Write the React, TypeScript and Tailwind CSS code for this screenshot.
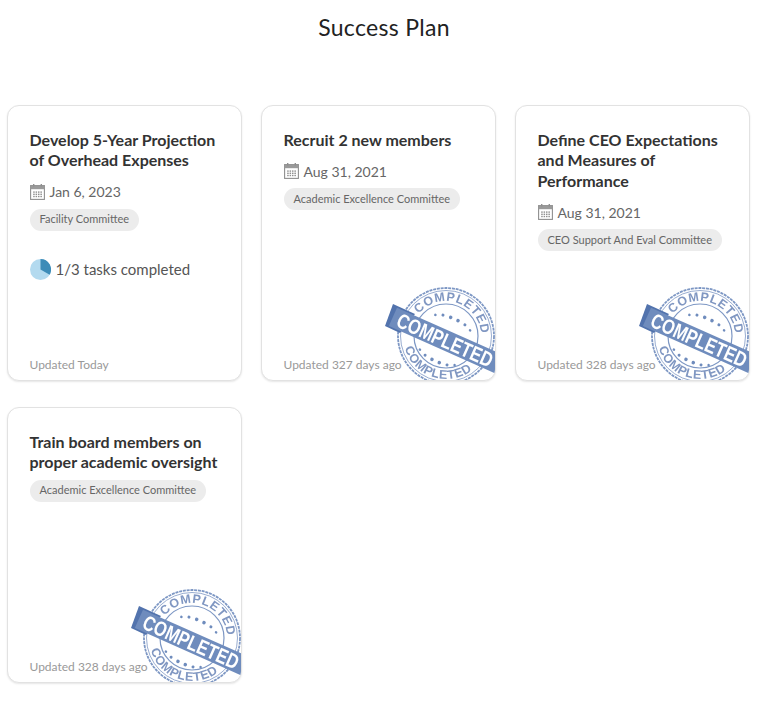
const font = "font-['Lato','Noto_Sans',sans-serif]";

function CalendarIcon() {
  const dots = [];
  for (let r = 0; r < 3; r++) for (let c = 0; c < 4; c++) dots.push(<rect key={`${r}-${c}`} x={3.2 + c * 2.4} y={7.4 + r * 2.2} width="1.5" height="1.4" fill="#8f8f8f" />);
  return (
    <svg width="15" height="16" viewBox="0 0 15 16" className="shrink-0">
      <rect x="0.6" y="1.6" width="13.8" height="13.8" fill="#fff" stroke="#8f8f8f" strokeWidth="1.1" />
      <rect x="0.6" y="1.6" width="13.8" height="3.6" fill="#9a9a9a" />
      <rect x="3" y="0" width="1.4" height="2.6" fill="#8f8f8f" />
      <rect x="10.6" y="0" width="1.4" height="2.6" fill="#8f8f8f" />
      {dots}
    </svg>
  );
}

function Pie() {
  return (
    <svg width="21" height="21" viewBox="0 0 21 21" className="shrink-0">
      <circle cx="10.5" cy="10.5" r="10.5" fill="#b3daef" />
      <path d="M10.5 10.5 L10.5 0 A10.5 10.5 0 0 1 19.6 15.75 Z" fill="#3d8cb8" />
    </svg>
  );
}

function Stamp() {
  const c = "#7d97c4";
  const sans = "'Liberation Sans',sans-serif";
  return (
    <svg width="113" height="94" viewBox="0 0 113 94" className="absolute right-0 bottom-0 blur-[0.5px]">
      <defs>
        <path id="stampTop" d="M 29 50 A 35 35 0 0 1 99 50" />
        <path id="stampBottom" d="M 21 50 A 43 43 0 0 0 107 50" />
      </defs>
      <circle cx="64" cy="50" r="48" fill="none" stroke={c} strokeWidth="1.8" strokeDasharray="3 0.8" />
      <circle cx="64" cy="50" r="45.5" fill="none" stroke={c} strokeWidth="0.8" />
      <circle cx="64" cy="50" r="32" fill="none" stroke={c} strokeWidth="1.2" />
      <g transform="rotate(18 64 50)">
        <text fontFamily={sans} fontWeight="700" fontSize="12.5" fill="#8097c2" letterSpacing="0.6">
          <textPath href="#stampTop" startOffset="50%" textAnchor="middle">COMPLETED</textPath>
        </text>
        <text fontFamily={sans} fontWeight="700" fontSize="12.5" fill="#8097c2" letterSpacing="0.6">
          <textPath href="#stampBottom" startOffset="50%" textAnchor="middle">COMPLETED</textPath>
        </text>
      </g>
      <polygon points="11,18 3,40 18,47 33,28" fill="#5273ad" />
      <g transform="rotate(24 63 54)">
        <g fill="#6f8cbd">
          <circle cx="44" cy="35" r="1.3" /><circle cx="51" cy="32" r="1.5" /><circle cx="59" cy="31" r="1.8" /><circle cx="67" cy="31" r="1.8" /><circle cx="75" cy="32" r="1.5" /><circle cx="82" cy="35" r="1.3" />
          <circle cx="44" cy="73" r="1.3" /><circle cx="51" cy="76" r="1.5" /><circle cx="59" cy="77" r="1.8" /><circle cx="67" cy="77" r="1.8" /><circle cx="75" cy="76" r="1.5" /><circle cx="82" cy="73" r="1.3" />
        </g>
        <rect x="6" y="44" width="116" height="20" fill="#6f8cbd" />
        <text x="63" y="61.5" textAnchor="middle" fontFamily={sans} fontWeight="700" fontSize="21" fill="#fff" textLength="103" lengthAdjust="spacingAndGlyphs">COMPLETED</text>
      </g>
    </svg>
  );
}

function Card({ title, date, tag, tasks, updated, done }: { title: string[]; date?: string; tag: string; tasks?: string; updated: string; done?: boolean }) {
  return (
    <div className="relative h-[276px] overflow-hidden rounded-[12px] border-[1.5px] border-[#e2e2e2] bg-white pl-[21.5px] pr-3 pt-[23.5px] shadow-[0_1px_2px_rgba(0,0,0,0.1)]">
      <h2 className="text-[16px] font-bold leading-[20.5px] text-[#333333]">
        {title.map((t) => <div key={t}>{t}</div>)}
      </h2>
      {date ? (
        <div className="mb-[7px] mt-[11px] flex h-[20px] items-center gap-[5px] text-[14px] text-[#666666]">
          <CalendarIcon />
          <span>{date}</span>
        </div>
      ) : (
        <div className="h-[7px]" />
      )}
      <div className="flex h-[22px] w-fit items-center rounded-full bg-[#ececec] px-[10px] text-[11px] text-[#666666]">{tag}</div>
      {tasks && (
        <div className="mt-[28px] flex h-[22px] items-center gap-[5px] text-[15px] text-[#555555]">
          <Pie />
          <span>{tasks}</span>
        </div>
      )}
      {done && <Stamp />}
      <div className="absolute bottom-[7.5px] left-[21.5px] text-[12px] leading-[16px] text-[#999999]">{updated}</div>
    </div>
  );
}

export default function App() {
  return (
    <div className={`${font} min-h-[702px] w-[768px] bg-white`}>
      <h1 className="h-[105px] pt-[12px] text-center text-[23px] font-normal leading-[30px] tracking-[0.3px] text-[#222222]">Success Plan</h1>
      <div className="grid grid-cols-[235px_235px_235px] gap-x-[19px] gap-y-[26px] pl-[7px]">
        <Card title={["Develop 5-Year Projection", "of Overhead Expenses"]} date="Jan 6, 2023" tag="Facility Committee" tasks="1/3 tasks completed" updated="Updated Today" />
        <Card title={["Recruit 2 new members"]} date="Aug 31, 2021" tag="Academic Excellence Committee" updated="Updated 327 days ago" done />
        <Card title={["Define CEO Expectations", "and Measures of", "Performance"]} date="Aug 31, 2021" tag="CEO Support And Eval Committee" updated="Updated 328 days ago" done />
        <Card title={["Train board members on", "proper academic oversight"]} tag="Academic Excellence Committee" updated="Updated 328 days ago" done />
      </div>
    </div>
  );
}
